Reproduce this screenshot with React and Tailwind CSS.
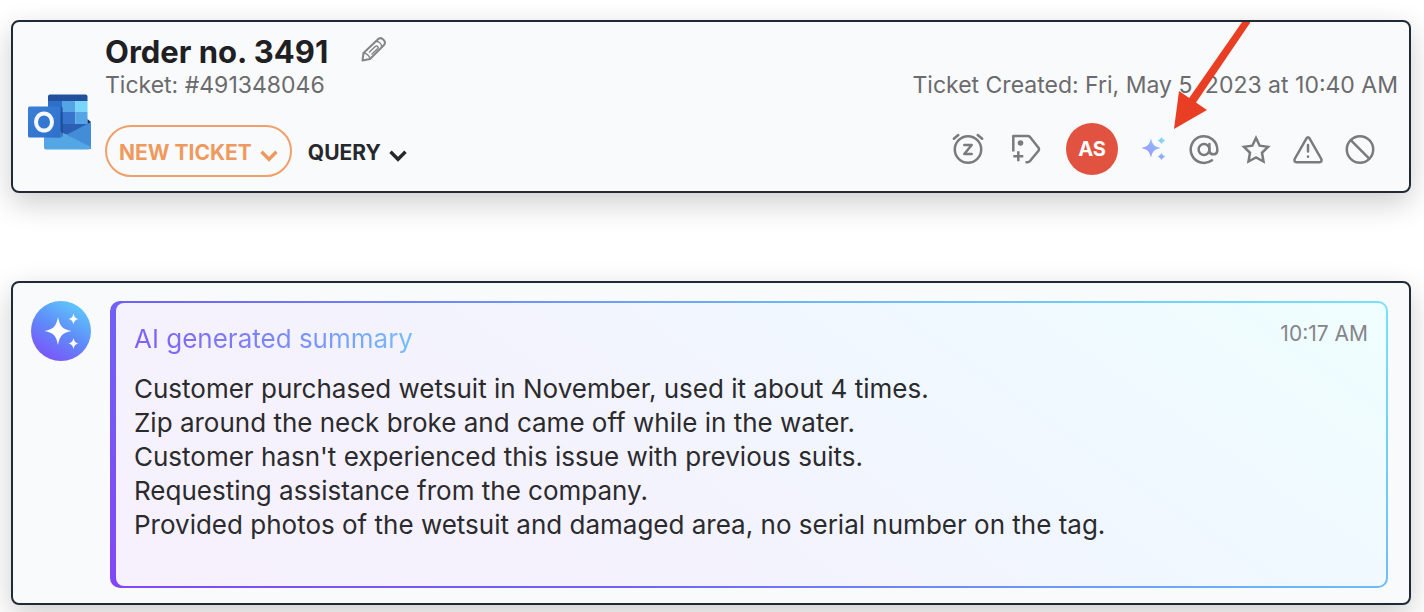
import React from 'react';

const summaryLines = [
  'Customer purchased wetsuit in November, used it about 4 times.',
  'Zip around the neck broke and came off while in the water.',
  "Customer hasn't experienced this issue with previous suits.",
  'Requesting assistance from the company.',
  'Provided photos of the wetsuit and damaged area, no serial number on the tag.',
];

const Icon = ({ children }) => (
  <svg
    className="size-8"
    viewBox="0 0 32 32"
    fill="none"
    stroke="currentColor"
    strokeWidth="2.5"
    strokeLinecap="round"
    strokeLinejoin="round"
    aria-hidden="true"
  >
    {children}
  </svg>
);

const OutlookLogo = () => (
  <svg className="h-14 w-16 shrink-0" viewBox="0 0 64 56" aria-hidden="true">
    <defs>
      <linearGradient id="outlookTile" x1="0" y1="0" x2="1" y2="1">
        <stop offset="0" stopColor="#3a7fd8" />
        <stop offset="1" stopColor="#2f6fca" />
      </linearGradient>
    </defs>
    <path d="M20 2.5Q20 .5 22 .5H57.500Q59.500 .5 59.500 2.500V7H20Z" fill="#22509c" />
    <path d="M20 7H34V18H20Z" fill="#2f6fc8" />
    <path d="M34 7H47.500V18H34Z" fill="#53a5e6" />
    <path d="M47.500 7H59.500V18H47.500Z" fill="#78d6fb" />
    <path d="M20 18H34V30H20Z" fill="#2459ae" />
    <path d="M34 18H47.500V30H34Z" fill="#3674cd" />
    <path d="M47.500 18H59.500V30H47.500Z" fill="#53a5e6" />
    <path d="M20 30H59.500V34L42 42L20 34Z" fill="#2a5fb3" />
    <path d="M59.500 25L63 28L59.500 31Z" fill="#152c6b" />
    <path d="M63 28V55H30L38 41Z" fill="#428cd8" />
    <path d="M16 30L38 40.500L63 53Q62.500 55.500 60 55.500H18Q16 55.500 16 53.500Z" fill="#55a6e5" />
    <path d="M16 43.500H31Q35 43.500 35 40V14L32.500 12V44Z" fill="#123c7a" opacity=".45" />
    <rect x="0" y="12.500" width="32.500" height="31" rx="1.500" fill="url(#outlookTile)" />
    <ellipse cx="16" cy="28" rx="8" ry="8.600" fill="none" stroke="#f4f8fd" strokeWidth="4" />
  </svg>
);

const PencilIcon = () => (
  <svg
    className="size-7"
    viewBox="0 0 28 28"
    fill="none"
    stroke="currentColor"
    strokeWidth="2"
    strokeLinejoin="round"
    strokeLinecap="round"
    aria-hidden="true"
  >
    <path d="M2.500 26.500L3.500 19L18.300 5C21.500 2.300 27 7.500 24 11L10 25Z" />
    <path d="M3.500 19C6.100 18.800 10.200 22.500 10 25" strokeWidth="1.500" />
    <path d="M9.500 18L15.500 12.300C17 11.200 19 13.200 17.800 14.500L12 20M16 7.300C19.200 7.500 21.500 10 21.700 12.800" strokeWidth="1.500" />
  </svg>
);

const Chevron = () => (
  <svg
    className="mt-1.5 h-3 w-[18px]"
    viewBox="0 0 18 12"
    fill="none"
    stroke="currentColor"
    strokeWidth="3.4"
    aria-hidden="true"
  >
    <path d="M1.500 1.800L9 9.300L16.500 1.800" />
  </svg>
);

const SparkleIcon = () => (
  <svg className="size-6" viewBox="0 0 24 24" aria-hidden="true">
    <defs>
      <linearGradient id="sparkle" x1="2" y1="22" x2="22" y2="2" gradientUnits="userSpaceOnUse">
        <stop offset="0" stopColor="#a594fb" />
        <stop offset=".5" stopColor="#92acfc" />
        <stop offset="1" stopColor="#82dcfc" />
      </linearGradient>
    </defs>
    <g fill="url(#sparkle)">
      <path d="M9 1.500C10.800 8 12 9.200 18.500 11C12 12.800 10.800 14 9 20.500C7.200 14 6 12.800 -.5 11C6 9.200 7.200 8 9 1.500Z" />
      <path d="M19.500 0C20.800 2 21.300 2.500 23.300 3.500C21.300 4.500 20.800 5 19.500 7C18.200 5 17.700 4.500 15.700 3.500C17.700 2.500 18.200 2 19.500 0Z" />
      <path d="M19.500 16C20.800 18 21.300 18.500 23.300 19.500C21.300 20.500 20.800 21 19.500 23C18.200 21 17.700 20.500 15.700 19.500C17.700 18.500 18.200 18 19.500 16Z" />
    </g>
  </svg>
);

const AssistantAvatar = () => (
  <div className="size-15 shrink-0 rounded-full bg-[linear-gradient(30deg,#7f4bf8_5%,#5f8cfa_50%,#5fd0fb_95%)]">
    <svg className="size-15" viewBox="0 0 60 60" fill="#fff" aria-hidden="true">
      <path d="M27 16C29 25.500 31 28 40.500 30C31 32 29 34.500 27 44C25 34.500 23 32 13.500 30C23 28 25 25.500 27 16Z" />
      <path d="M42.500 12.500C43.500 16.300 44.200 17 47.500 18C44.200 19 43.500 19.700 42.500 23.500C41.500 19.700 40.800 19 37.500 18C40.800 17 41.500 16.300 42.500 12.500Z" />
      <path d="M42.500 37C43.500 40.800 44.200 41.500 47.500 42.500C44.200 43.500 43.500 44.200 42.500 48C41.500 44.200 40.800 43.500 37.500 42.500C40.800 41.500 41.500 40.800 42.500 37Z" />
    </svg>
  </div>
);

const TicketHeader = () => (
  <header className="relative flex items-start gap-[13px] overflow-hidden rounded-lg border-2 border-[#1f2a35] bg-[#f9fafc] pb-3.5 pl-[15px] pr-[11px] pt-3">
    <div className="pt-[60px]">
      <OutlookLogo />
    </div>
    <div className="min-w-0 flex-1">
      <div className="flex h-9 items-start gap-8">
        <h1 className="text-[31px] font-bold leading-9 text-[#1f2023]">Order no. 3491</h1>
        <button type="button" aria-label="Edit title" className="text-[#858585]">
          <PencilIcon />
        </button>
      </div>
      <div className="flex justify-between text-[23px] leading-[30px] text-[#6b6b6d]">
        <p>Ticket: #491348046</p>
        <p>Ticket Created: Fri, May 5, 2023 at 10:40 AM</p>
      </div>
      <div className="mt-[23px] flex items-start justify-between">
        <div className="flex items-center gap-4 pt-0.5">
          <button
            type="button"
            className="flex h-13 items-center gap-2 rounded-full border-2 border-[#f0a06a] px-3 pt-1 text-[21px] font-bold text-[#ee9a5e]"
          >
            NEW TICKET
            <Chevron />
          </button>
          <button type="button" className="flex items-center gap-2 pt-1 text-[21px] font-bold text-[#26282c]">
            QUERY
            <Chevron />
          </button>
        </div>
        <div className="flex items-center gap-6 pr-[22px] text-[#7b7b7d]">
          <div className="flex gap-[26px]">
            <button type="button" aria-label="Snooze">
              <Icon>
                <circle cx="16" cy="16.500" r="13.200" />
                <path d="M1.800 5.800L6.300 2M25.700 2L30.200 5.800" />
                <path d="M12.300 12H19.700L12.300 21H19.700" />
              </Icon>
            </button>
            <button type="button" aria-label="Add tag">
              <Icon>
                <path d="M3.300 18.500V3H17.500Q19 3 20 4L28.500 14.800Q29.500 16.300 28.500 17.800L20 28Q19 29.300 17.500 29.300H15.500" strokeLinecap="butt" />
                <circle cx="10.500" cy="10" r="2.800" fill="currentColor" stroke="none" />
                <path d="M8.300 18.300V28.200M3.300 23.300H13.300" strokeLinecap="butt" />
              </Icon>
            </button>
          </div>
          <button type="button" className="size-13 rounded-full bg-[#e25241] text-xl font-bold text-white">
            AS
          </button>
          <div className="flex items-center gap-5">
            <button type="button" aria-label="Summarize" className="pr-0.5">
              <SparkleIcon />
            </button>
            <button type="button" aria-label="Mention">
              <Icon>
                <circle cx="16" cy="16.500" r="5.400" />
                <path d="M21.400 11V18A4 4 0 0 0 29.300 18V16.500A13.300 13.300 0 1 0 24 27.200" />
              </Icon>
            </button>
            <button type="button" aria-label="Star">
              <Icon>
                <path
                  d="M16 5L19.700 12.700L28 13.800L22 19.800L23.500 28.500L16 24.400L8.500 28.500L10 19.800L4 13.800L12.300 12.700Z"
                  strokeLinejoin="miter"
                />
              </Icon>
            </button>
            <button type="button" aria-label="Report">
              <Icon>
                <path d="M14.500 5.300Q16 3 17.500 5.300L29.300 26Q30.300 29 27.500 29.200H4.500Q1.700 29 2.700 26Z" />
                <path d="M16 12V18.500M16 23.500V23.700" />
              </Icon>
            </button>
            <button type="button" aria-label="Block">
              <Icon>
                <circle cx="16" cy="16.500" r="13.200" />
                <path d="M7 7.300L25.200 25.700" />
              </Icon>
            </button>
          </div>
        </div>
      </div>
    </div>
    {/* Arrow pointing at the summarize button */}
    <svg
      className="pointer-events-none absolute right-[159px] top-0 h-27 w-20"
      viewBox="0 0 80 108"
      fill="#e83e24"
      aria-hidden="true"
    >
      <path d="M73.500 -2H82L25 82L18.500 77Z" />
      <path d="M4 107L9 69L37 88Z" />
    </svg>
  </header>
);

const SummaryCard = () => (
  <section className="flex items-start gap-[19px] rounded-lg border-2 border-[#1f2a35] bg-[#f9fafc] pb-[15px] pl-[18px] pr-[21px] pt-[18px]">
    <AssistantAvatar />
    <div className="min-w-0 flex-1 rounded-[10px] bg-[linear-gradient(30deg,#8247f5,#6f63f8_30%,#6cb2fa_65%,#74e4f8)] py-0.5 pl-1.5 pr-0.5">
      <div className="rounded-lg bg-[linear-gradient(35deg,#f6f1fd,#f4f2fd_35%,#f0f8ff_70%,#effeff)] px-[18px] pb-11 pt-[19px]">
        <div className="flex items-start justify-between">
          <h2 className="bg-[linear-gradient(80deg,#7f5ff5,#7b86fa_50%,#74bffa)] bg-clip-text text-[26px] leading-[34px] text-transparent">
            AI generated summary
          </h2>
          <time className="text-[21px] leading-6 text-[#858589]">10:17 AM</time>
        </div>
        <div className="mt-4 text-[26px] leading-[34px] text-[#2b2b2e]">
          {summaryLines.map((line) => (
            <p key={line}>{line}</p>
          ))}
        </div>
      </div>
    </div>
  </section>
);

const App = () => {
  return (
    <main className="flex min-h-screen flex-col gap-[88px] bg-white pb-[7px] pl-[11px] pr-[13px] pt-5 font-['Inter',sans-serif]">
      <div className="rounded-lg shadow-[0_10px_30px_rgba(0,0,0,0.2)]">
        <TicketHeader />
      </div>
      <div className="rounded-lg shadow-[0_10px_30px_rgba(0,0,0,0.2)]">
        <SummaryCard />
      </div>
    </main>
  );
};

export default App;
